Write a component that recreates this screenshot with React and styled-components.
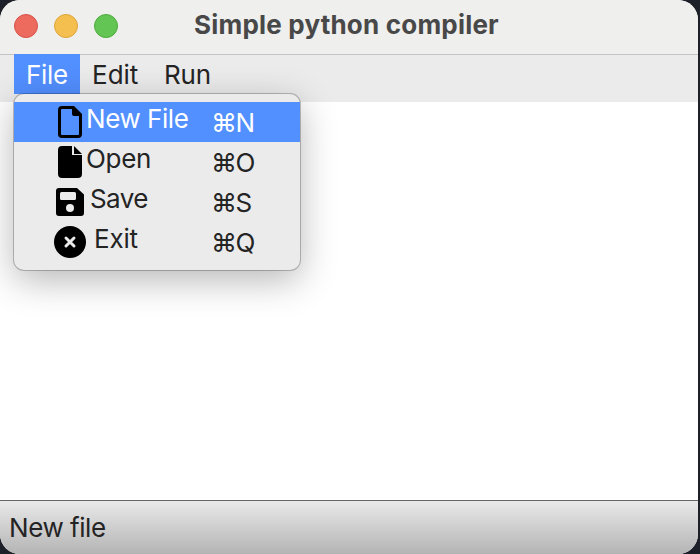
import React from "react";
import styled, { createGlobalStyle } from "styled-components";

const GlobalStyle = createGlobalStyle`
  body {
    margin: 0;
    background: #1d2028;
    overflow: hidden;
    font-family: Inter, "Liberation Sans", sans-serif;
    color: #242424;
  }
  * { box-sizing: border-box; }
`;

const Window = styled.div`
  width: 698px;
  height: 554px;
  display: flex;
  flex-direction: column;
  background: #fff;
  border-radius: 20px;
  overflow: hidden;
`;

const TitleBar = styled.header`
  flex: none;
  height: 55px;
  display: grid;
  grid-template-columns: 194px 1fr;
  background: #efefed;
  border-bottom: 1px solid #c4c4c4;
`;

const TrafficLights = styled.div`
  display: flex;
  gap: 16px;
  padding: 14px 0 0 14px;
`;

const Light = styled.span`
  width: 24px;
  height: 24px;
  border-radius: 50%;
  background: ${(p) => p.$fill};
  border: 1px solid ${(p) => p.$edge};
`;

const Text = styled.span`
  font-size: 26px;
  line-height: 32px;
  letter-spacing: ${(p) => p.$track || 0}px;
  white-space: nowrap;
`;

const Title = styled(Text).attrs({ as: "h1" })`
  margin: 9px 0 0;
  font-weight: 700;
  color: #484848;
`;

const MenuBar = styled.nav`
  flex: none;
  position: relative;
  height: 47px;
  display: flex;
  padding-left: 14px;
  background: #ebebeb;
`;

const MenuTitle = styled.div`
  width: ${(p) => p.$width}px;
  height: 40px;
  margin-top: -1px;
  padding: 5px 0 0 12px;
  background: ${(p) => (p.$active ? "#528fff" : "transparent")};
  color: ${(p) => (p.$active ? "#fff" : "inherit")};
`;

const Dropdown = styled.div`
  position: absolute;
  z-index: 1;
  top: 39px;
  left: 14px;
  width: 286px;
  height: 176px;
  padding: 8px 0;
  border-radius: 10px;
  background: #ebebeb;
  box-shadow: 0 0 0 1px rgba(0, 0, 0, 0.23), 0 10px 36px rgba(0, 0, 0, 0.29);
`;

const Item = styled.div`
  height: 40px;
  display: grid;
  grid-template-columns: 40px 157px 1fr;
  background: ${(p) => (p.$active ? "#528fff" : "transparent")};
  color: ${(p) => (p.$active ? "#fff" : "inherit")};
`;

const ItemLabel = styled.div`
  grid-column: 2;
  display: flex;
  gap: ${(p) => p.$gap}px;
  padding-top: 1px;
`;

const Shortcut = styled(Text)`
  padding-top: 5px;
`;

const Icon = styled.svg`
  flex: none;
  width: 32px;
  height: 32px;
  margin-top: 3px;
  fill: #000;
`;

const Editor = styled.main`
  flex: 1;
`;

const StatusBar = styled.footer`
  flex: none;
  height: 54px;
  padding: 11px 0 0 9px;
  border-top: 1px solid #666;
  background: linear-gradient(#e9e9e9, #b4b4b4);
`;

const icons = {
  blank: (
    <path fillRule="evenodd" d="M8 0H20L28 8V28a4 4 0 0 1-4 4H8a4 4 0 0 1-4-4V4a4 4 0 0 1 4-4Zm0 3a1 1 0 0 0-1 1V28a1 1 0 0 0 1 1H24a1 1 0 0 0 1-1V10H20a2 2 0 0 1-2-2V3Z" />
  ),
  file: <path d="M8 0H18V9H28V28a4 4 0 0 1-4 4H8a4 4 0 0 1-4-4V4a4 4 0 0 1 4-4ZM20 0 28 8H20Z" />,
  save: (
    <path fillRule="evenodd" d="M5 2H23L30 8.500V27a3 3 0 0 1-3 3H5a3 3 0 0 1-3-3V5a3 3 0 0 1 3-3ZM7.500 6A1.500 1.500 0 0 0 6 7.500V12.500A1.500 1.500 0 0 0 7.500 14H20.500A1.500 1.500 0 0 0 22 12.500V7.500A1.500 1.500 0 0 0 20.500 6ZM16 18a4 4 0 1 0 0 8 4 4 0 0 0 0-8Z" />
  ),
  exit: (
    <>
      <circle cx="16" cy="16" r="16" />
      <path d="m12 12 8 8m0-8-8 8" fill="none" stroke="#ebebeb" strokeWidth="3" strokeLinecap="round" />
    </>
  ),
};

const items = [
  { label: "New File", keys: "⌘N", icon: "blank", gap: 0, track: -0.45, active: true },
  { label: "Open", keys: "⌘O", icon: "file", gap: 0, track: -0.3 },
  { label: "Save", keys: "⌘S", icon: "save", gap: 4, track: -0.6 },
  { label: "Exit", keys: "⌘Q", icon: "exit", gap: 8, track: -0.2 },
];

export default function App() {
  return (
    <>
      <GlobalStyle />
      <Window>
        <TitleBar>
          <TrafficLights>
            <Light $fill="#ec6a5e" $edge="#d65248" />
            <Light $fill="#f5bf4f" $edge="#dca53b" />
            <Light $fill="#62c554" $edge="#4daa3c" />
          </TrafficLights>
          <Title $track={0.2}>Simple python compiler</Title>
        </TitleBar>
        <MenuBar>
          <MenuTitle $width={66} $active><Text $track={-0.3}>File</Text></MenuTitle>
          <MenuTitle $width={72}><Text>Edit</Text></MenuTitle>
          <MenuTitle $width={72}><Text $track={-0.2}>Run</Text></MenuTitle>
          <Dropdown>
            {items.map((it) => (
              <Item key={it.label} $active={it.active}>
                <ItemLabel $gap={it.gap}>
                  <Icon viewBox="0 0 32 32">{icons[it.icon]}</Icon>
                  <Text $track={it.track}>{it.label}</Text>
                </ItemLabel>
                <Shortcut $track={-1.5}>{it.keys}</Shortcut>
              </Item>
            ))}
          </Dropdown>
        </MenuBar>
        <Editor />
        <StatusBar><Text $track={-0.45}>New file</Text></StatusBar>
      </Window>
    </>
  );
}
